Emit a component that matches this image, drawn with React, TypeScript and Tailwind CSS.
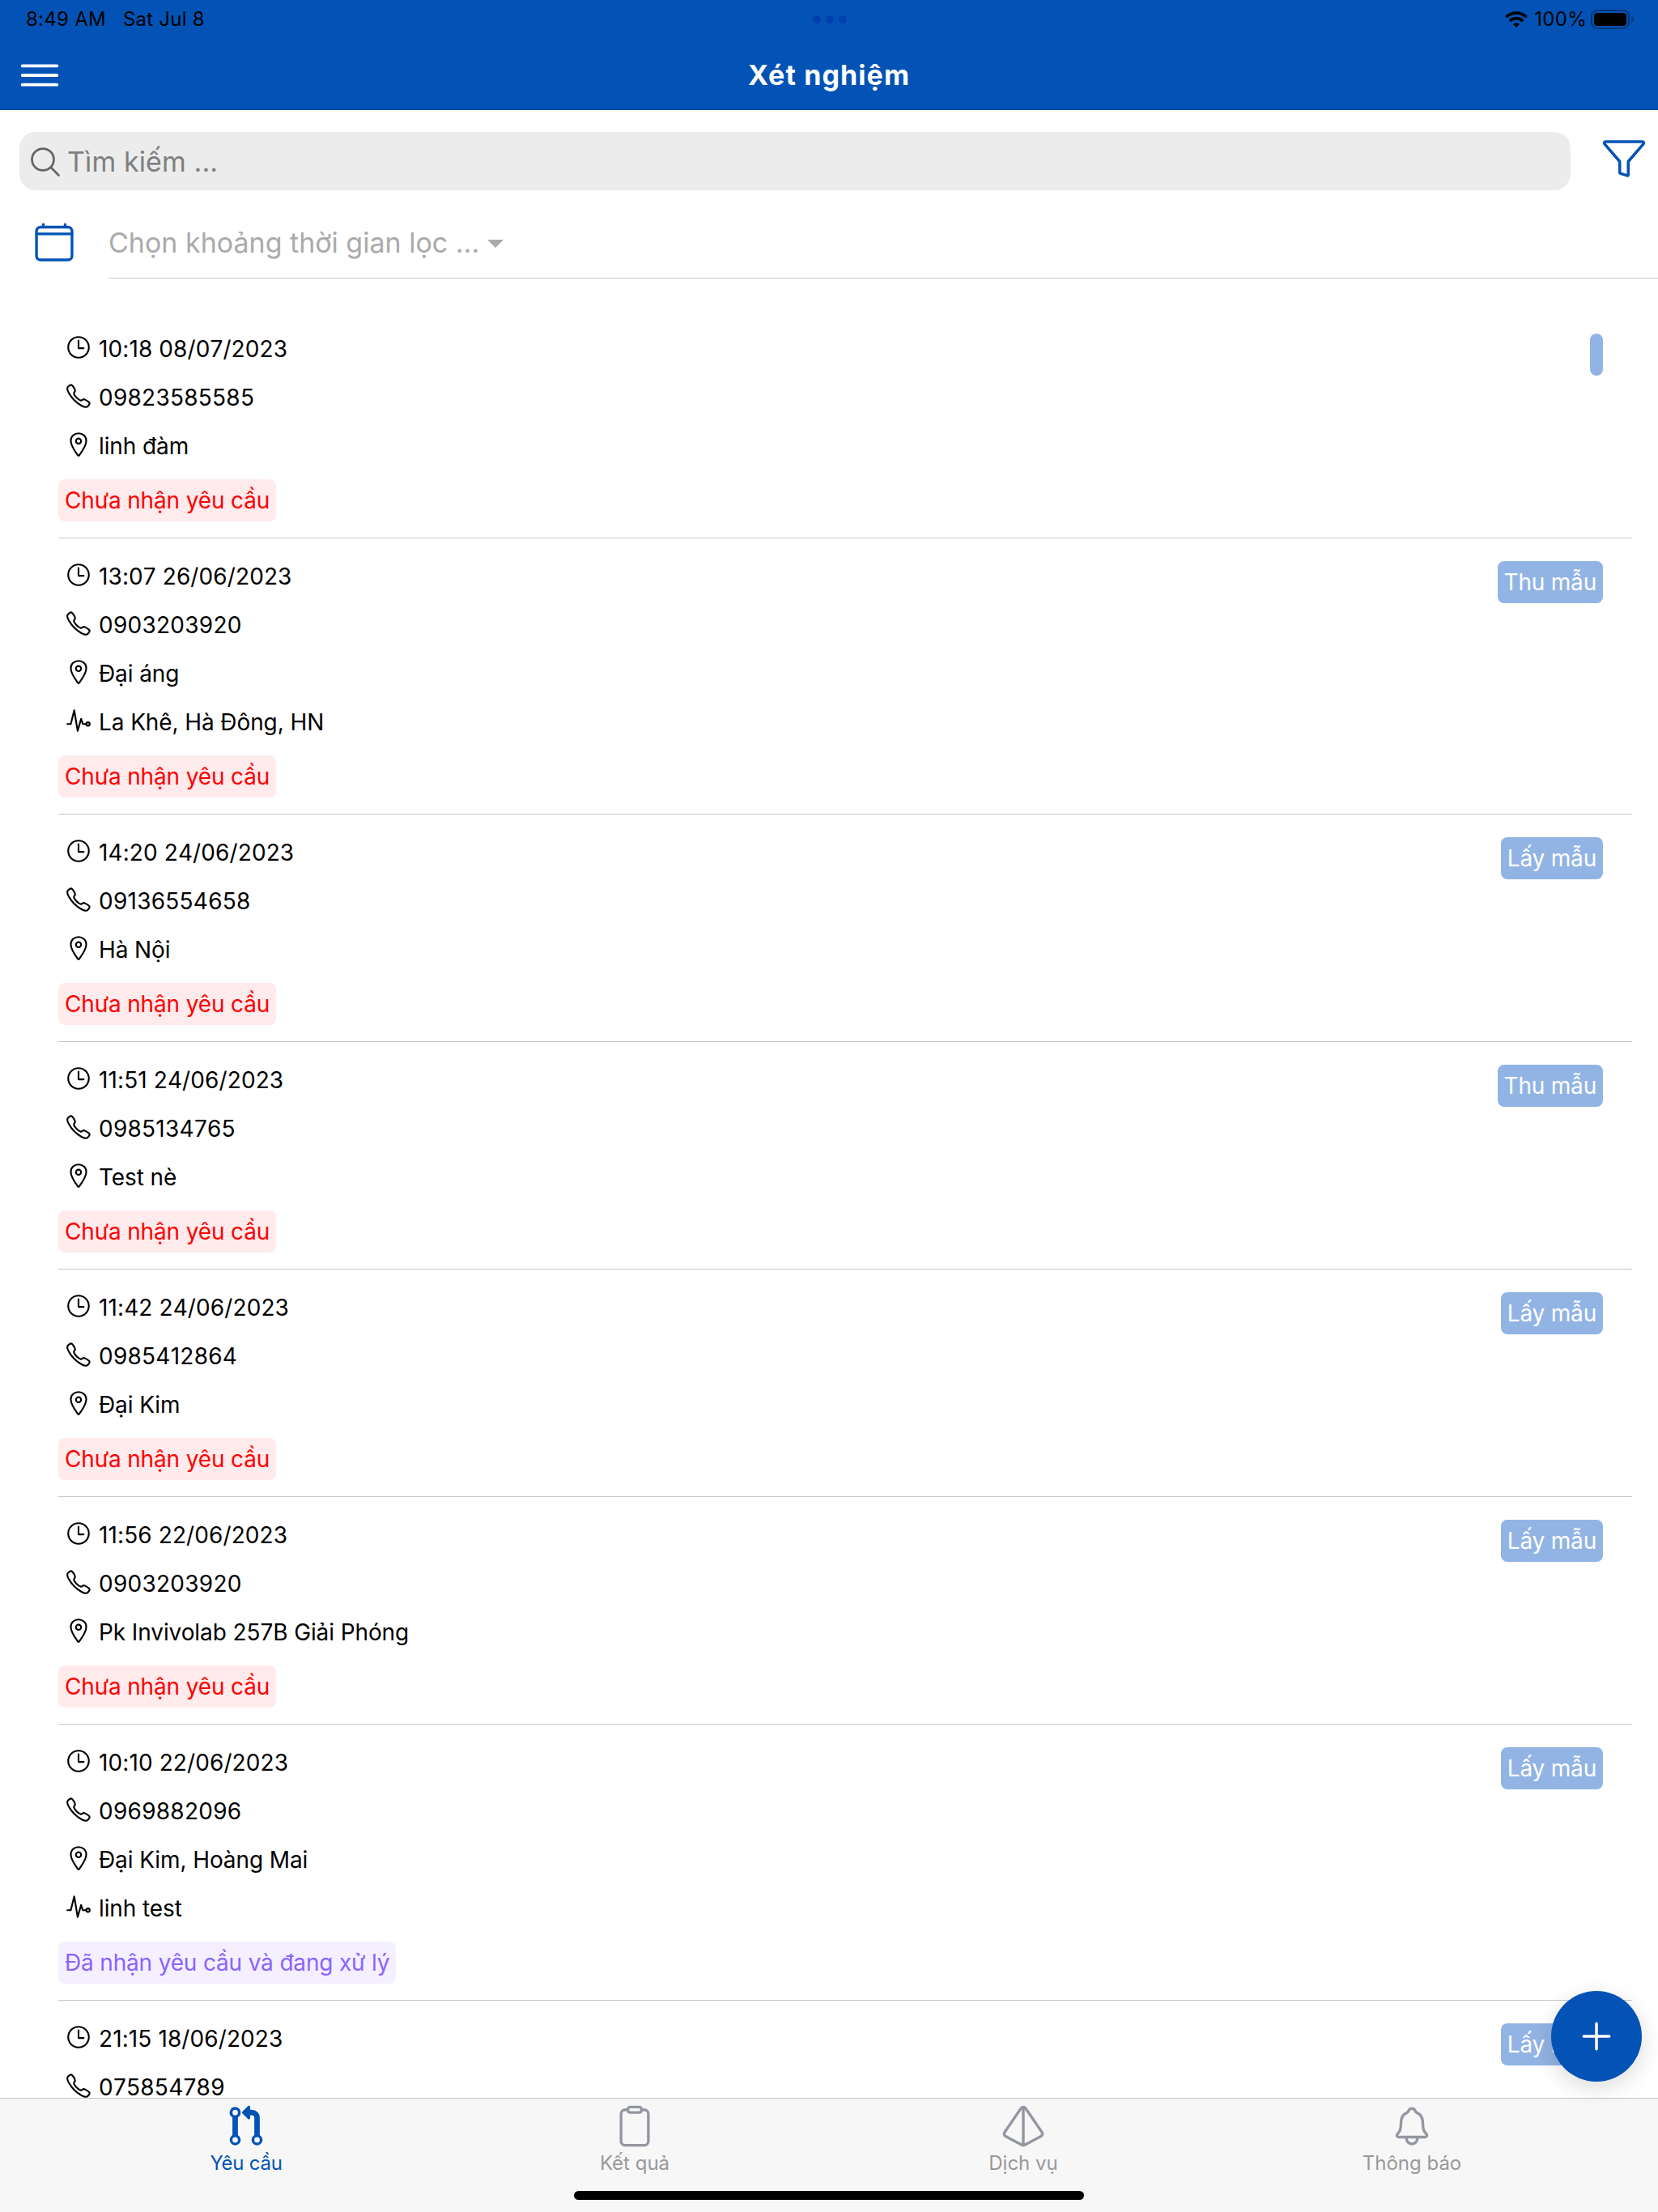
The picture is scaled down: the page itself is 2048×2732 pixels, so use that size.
import React from "react";
import {
  IoAdd,
  IoCalendarClearOutline,
  IoCallOutline,
  IoClipboardOutline,
  IoFunnelOutline,
  IoGitPullRequest,
  IoLocationOutline,
  IoMenuOutline,
  IoNotificationsOutline,
  IoPrismOutline,
  IoPulseOutline,
  IoSearchOutline,
  IoTimeOutline,
} from "react-icons/io5";
import type { IconType } from "react-icons";

type Request = {
  time: string;
  phone: string;
  address?: string;
  note?: string;
  status?: "pending" | "processing";
  tag: string;
};

const requests: Request[] = [
  { time: "10:18 08/07/2023", phone: "09823585585", address: "linh đàm", status: "pending", tag: "" },
  { time: "13:07 26/06/2023", phone: "0903203920", address: "Đại áng", note: "La Khê, Hà Đông, HN", status: "pending", tag: "Thu mẫu" },
  { time: "14:20 24/06/2023", phone: "09136554658", address: "Hà Nội", status: "pending", tag: "Lấy mẫu" },
  { time: "11:51 24/06/2023", phone: "0985134765", address: "Test nè", status: "pending", tag: "Thu mẫu" },
  { time: "11:42 24/06/2023", phone: "0985412864", address: "Đại Kim", status: "pending", tag: "Lấy mẫu" },
  { time: "11:56 22/06/2023", phone: "0903203920", address: "Pk Invivolab 257B Giải Phóng", status: "pending", tag: "Lấy mẫu" },
  { time: "10:10 22/06/2023", phone: "0969882096", address: "Đại Kim, Hoàng Mai", note: "linh test", status: "processing", tag: "Lấy mẫu" },
  { time: "21:15 18/06/2023", phone: "075854789", tag: "Lấy mẫu" },
];

function StatusBar() {
  return (
    <div className="grid h-12 grid-cols-3 items-center pl-8 pr-[30px] text-2xl text-black">
      <div className="flex gap-[21px] tracking-[0.25px]">
        <span>8:49 AM</span>
        <span>Sat Jul 8</span>
      </div>
      <div className="flex justify-center gap-1.5">
        <span className="size-2.5 rounded-full bg-[#003fb0]" />
        <span className="size-2.5 rounded-full bg-[#003fb0]" />
        <span className="size-2.5 rounded-full bg-[#003fb0]" />
      </div>
      <div className="flex items-center justify-end">
        <svg width="28" height="20" viewBox="0 0 28 20" fill="none" stroke="black" strokeWidth="3.6">
          <path d="M1.3 7.2a18 18 0 0 1 25.4 0" />
          <path d="M5.8 12a11.6 11.6 0 0 1 16.4 0" />
          <path d="M14 20l-4-4.2a5.7 5.7 0 0 1 8 0z" fill="black" stroke="none" />
        </svg>
        <span className="ml-2 tracking-[0.3px]">100%</span>
        <svg className="ml-[5px]" width="53" height="24" viewBox="0 0 53 24">
          <rect x="1" y="1" width="46" height="22" rx="6.5" fill="none" stroke="#02357a" strokeWidth="2" />
          <rect x="4" y="4" width="40" height="16" rx="4" fill="black" />
          <path d="M50 8c4 1.500 4 6.500 0 8z" fill="#02357a" />
        </svg>
      </div>
    </div>
  );
}

function Header() {
  return (
    <header className="h-[136px] shrink-0 border-b border-[#02479a] bg-[#0253b5]">
      <StatusBar />
      <div className="grid h-[88px] grid-cols-3 items-center pb-0.5">
        <IoMenuOutline className="ml-[18px] mt-1 size-[62px] text-white" />
        <h1 className="mt-0.5 text-center text-[34px] font-bold tracking-[1.1px] text-white">Xét nghiệm</h1>
      </div>
    </header>
  );
}

const rowText = {
  time: "pt-1 text-[28px] leading-[28px] tracking-[0.1px] [font-kerning:none]",
  phone: "pt-1 text-[28px] leading-[28px] tracking-[0.25px] [font-kerning:none]",
  plain: "pt-1 text-[28px] leading-[28px] tracking-[-0.1px]",
};

function Row({ icon: Icon, kind = "plain", children }: { icon: IconType; kind?: keyof typeof rowText; children: React.ReactNode }) {
  return (
    <div className="flex h-[60px] items-center gap-2">
      <Icon className="size-[34px]" />
      <span className={rowText[kind]}>{children}</span>
    </div>
  );
}

function RequestItem({ item }: { item: Request }) {
  return (
    <li className="ml-[72px] mr-8 flex justify-between border-b border-[#c6c6c8] pb-5">
      <div className="flex flex-col items-start pt-[15px]">
        <div className="pl-2">
          <Row icon={IoTimeOutline} kind="time">{item.time}</Row>
          <Row icon={IoCallOutline} kind="phone">{item.phone}</Row>
          {item.address && <Row icon={IoLocationOutline}>{item.address}</Row>}
          {item.note && <Row icon={IoPulseOutline}>{item.note}</Row>}
        </div>
        {item.status === "pending" && (
          <span className="mt-[13px] flex h-[52px] items-center rounded-lg bg-[#ffebec] px-2 text-[28px] tracking-[-0.15px] text-[#ff0000]">
            Chưa nhận yêu cầu
          </span>
        )}
        {item.status === "processing" && (
          <span className="mt-[13px] flex h-[52px] items-center rounded-lg bg-[#f4f0ff] px-2 text-[28px] tracking-[-0.17px] text-[#8b63ff]">
            Đã nhận yêu cầu và đang xử lý
          </span>
        )}
      </div>
      <span className="mr-9 mt-7 flex h-[52px] items-center rounded-lg bg-[#92b4e4] px-2 text-[28px] tracking-[-0.2px] text-white">
        {item.tag}
      </span>
    </li>
  );
}

function Tab({ icon: Icon, label, active }: { icon: IconType; label: string; active?: boolean }) {
  return (
    <div className={active ? "flex flex-1 flex-col items-center text-[#0253b5]" : "flex flex-1 flex-col items-center text-[#999999]"}>
      <Icon className={active ? "size-[54px]" : "size-[54px] text-[#9497a0]"} />
      <span className={active ? "mt-1 text-2xl leading-[30px] tracking-[-0.25px]" : "mt-1 text-2xl leading-[30px]"}>{label}</span>
    </div>
  );
}

export default function App() {
  return (
    <div className="relative flex h-[2732px] w-[2048px] flex-col overflow-hidden bg-white font-['Inter',sans-serif] text-black">
      <Header />
      <div className="flex shrink-0 items-start pl-6 pt-[27px]">
        <div className="flex h-[72px] w-[1916px] items-center rounded-[20px] bg-[#ececec] pl-2.5 pt-px">
          <IoSearchOutline className="size-11 text-[#666666]" />
          <span className="ml-[5px] text-[34px] tracking-[0.1px] text-[#7f7f7f]">Tìm kiếm ...</span>
        </div>
        <IoFunnelOutline className="ml-[38px] mt-[5px] size-[56px] text-[#0253b5]" />
      </div>
      <div className="flex h-[109px] shrink-0 pl-[40px]">
        <IoCalendarClearOutline className="mt-[37px] size-[54px] text-[#0253b5]" />
        <div className="ml-[40px] flex flex-1 items-center border-b border-[#c6c6c8] pb-1 pt-6 text-[34px] text-[#aaaaaa]">
          <span>Chọn khoảng thời gian lọc ...</span>
          <svg className="ml-2.5 mt-[3px]" width="20" height="10" viewBox="0 0 20 10">
            <path d="M0 0h20L10 10z" fill="#aaaaaa" />
          </svg>
        </div>
      </div>
      <ul className="mt-10 min-h-0 flex-1">
        {requests.map((r) => (
          <RequestItem key={r.time} item={r} />
        ))}
      </ul>
      <nav className="relative flex h-[141px] shrink-0 flex-col items-center border-t border-[#c4c4c6] bg-[#f7f7f7] px-16">
        <div className="flex w-full flex-1 pt-[7px]">
          <Tab icon={IoGitPullRequest} label="Yêu cầu" active />
          <Tab icon={IoClipboardOutline} label="Kết quả" />
          <Tab icon={IoPrismOutline} label="Dịch vụ" />
          <Tab icon={IoNotificationsOutline} label="Thông báo" />
        </div>
        <div className="mb-[15px] h-[11px] w-[630px] shrink-0 rounded-full bg-black" />
      </nav>
      <button className="absolute bottom-[161px] right-5 flex size-28 items-center justify-center rounded-full bg-[#0253b5] text-white shadow-[0_8px_28px_rgba(0,0,0,0.14)]">
        <IoAdd className="size-14" />
      </button>
    </div>
  );
}
